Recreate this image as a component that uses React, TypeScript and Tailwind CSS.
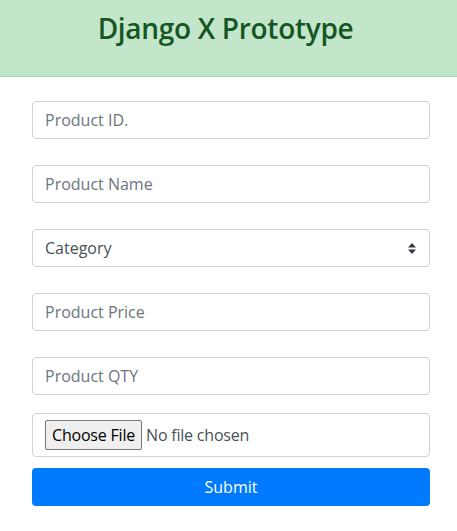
const font = { fontFamily: '"Open Sans", "Noto Sans", sans-serif' };

function Field({ placeholder }: { placeholder: string }) {
  return (
    <input
      type="text"
      placeholder={placeholder}
      className="block h-[38px] w-full rounded border border-[#ced4da] bg-white px-3 text-[16px] text-[#495057] placeholder:text-[#6c757d] outline-none"
    />
  );
}

export default function App() {
  return (
    <div className="min-h-[531px] bg-white" style={font}>
      <div className="h-[77px] border-b border-[#a8d5b3] bg-[#c3e6cb] pt-[9px] text-center">
        <h3 className="pr-[6px] text-[28px] font-semibold leading-[38px] tracking-[-0.3px] text-[#155724]">
          Django X Prototype
        </h3>
      </div>

      <form className="flex flex-col pl-8 pr-[27px] pt-[24px]">
        <Field placeholder="Product ID." />
        <div className="mt-[26px]">
          <Field placeholder="Product Name" />
        </div>
        <div className="relative mt-[26px] flex h-[38px] items-center rounded border border-[#ced4da] bg-white px-3 text-[16px] text-[#495057]">
          <span>Category</span>
          <svg className="absolute right-[13px] top-[13px]" width="8" height="11" viewBox="0 0 8 11">
            <path d="M4 0L8 4.5H0z M4 11L0 6.5H8z" fill="#343a40" />
          </svg>
        </div>
        <div className="mt-[26px]">
          <Field placeholder="Product Price" />
        </div>
        <div className="mt-[26px]">
          <Field placeholder="Product QTY" />
        </div>
        <div className="mt-[18px] flex h-[44px] items-center rounded border border-[#ced4da] bg-white pl-3 text-[16px] text-[#495057]">
          <span className="flex h-[30px] items-center rounded-[2px] border border-[#767676] bg-[#efefef] px-[6px] tracking-[-0.2px] text-black">
            Choose File
          </span>
          <span className="ml-[4px] tracking-[-0.2px]">No file chosen</span>
        </div>
        <button
          type="button"
          className="mt-[11px] h-[38px] w-full rounded bg-[#007bff] text-[16px] text-white"
        >
          Submit
        </button>
      </form>
    </div>
  );
}
